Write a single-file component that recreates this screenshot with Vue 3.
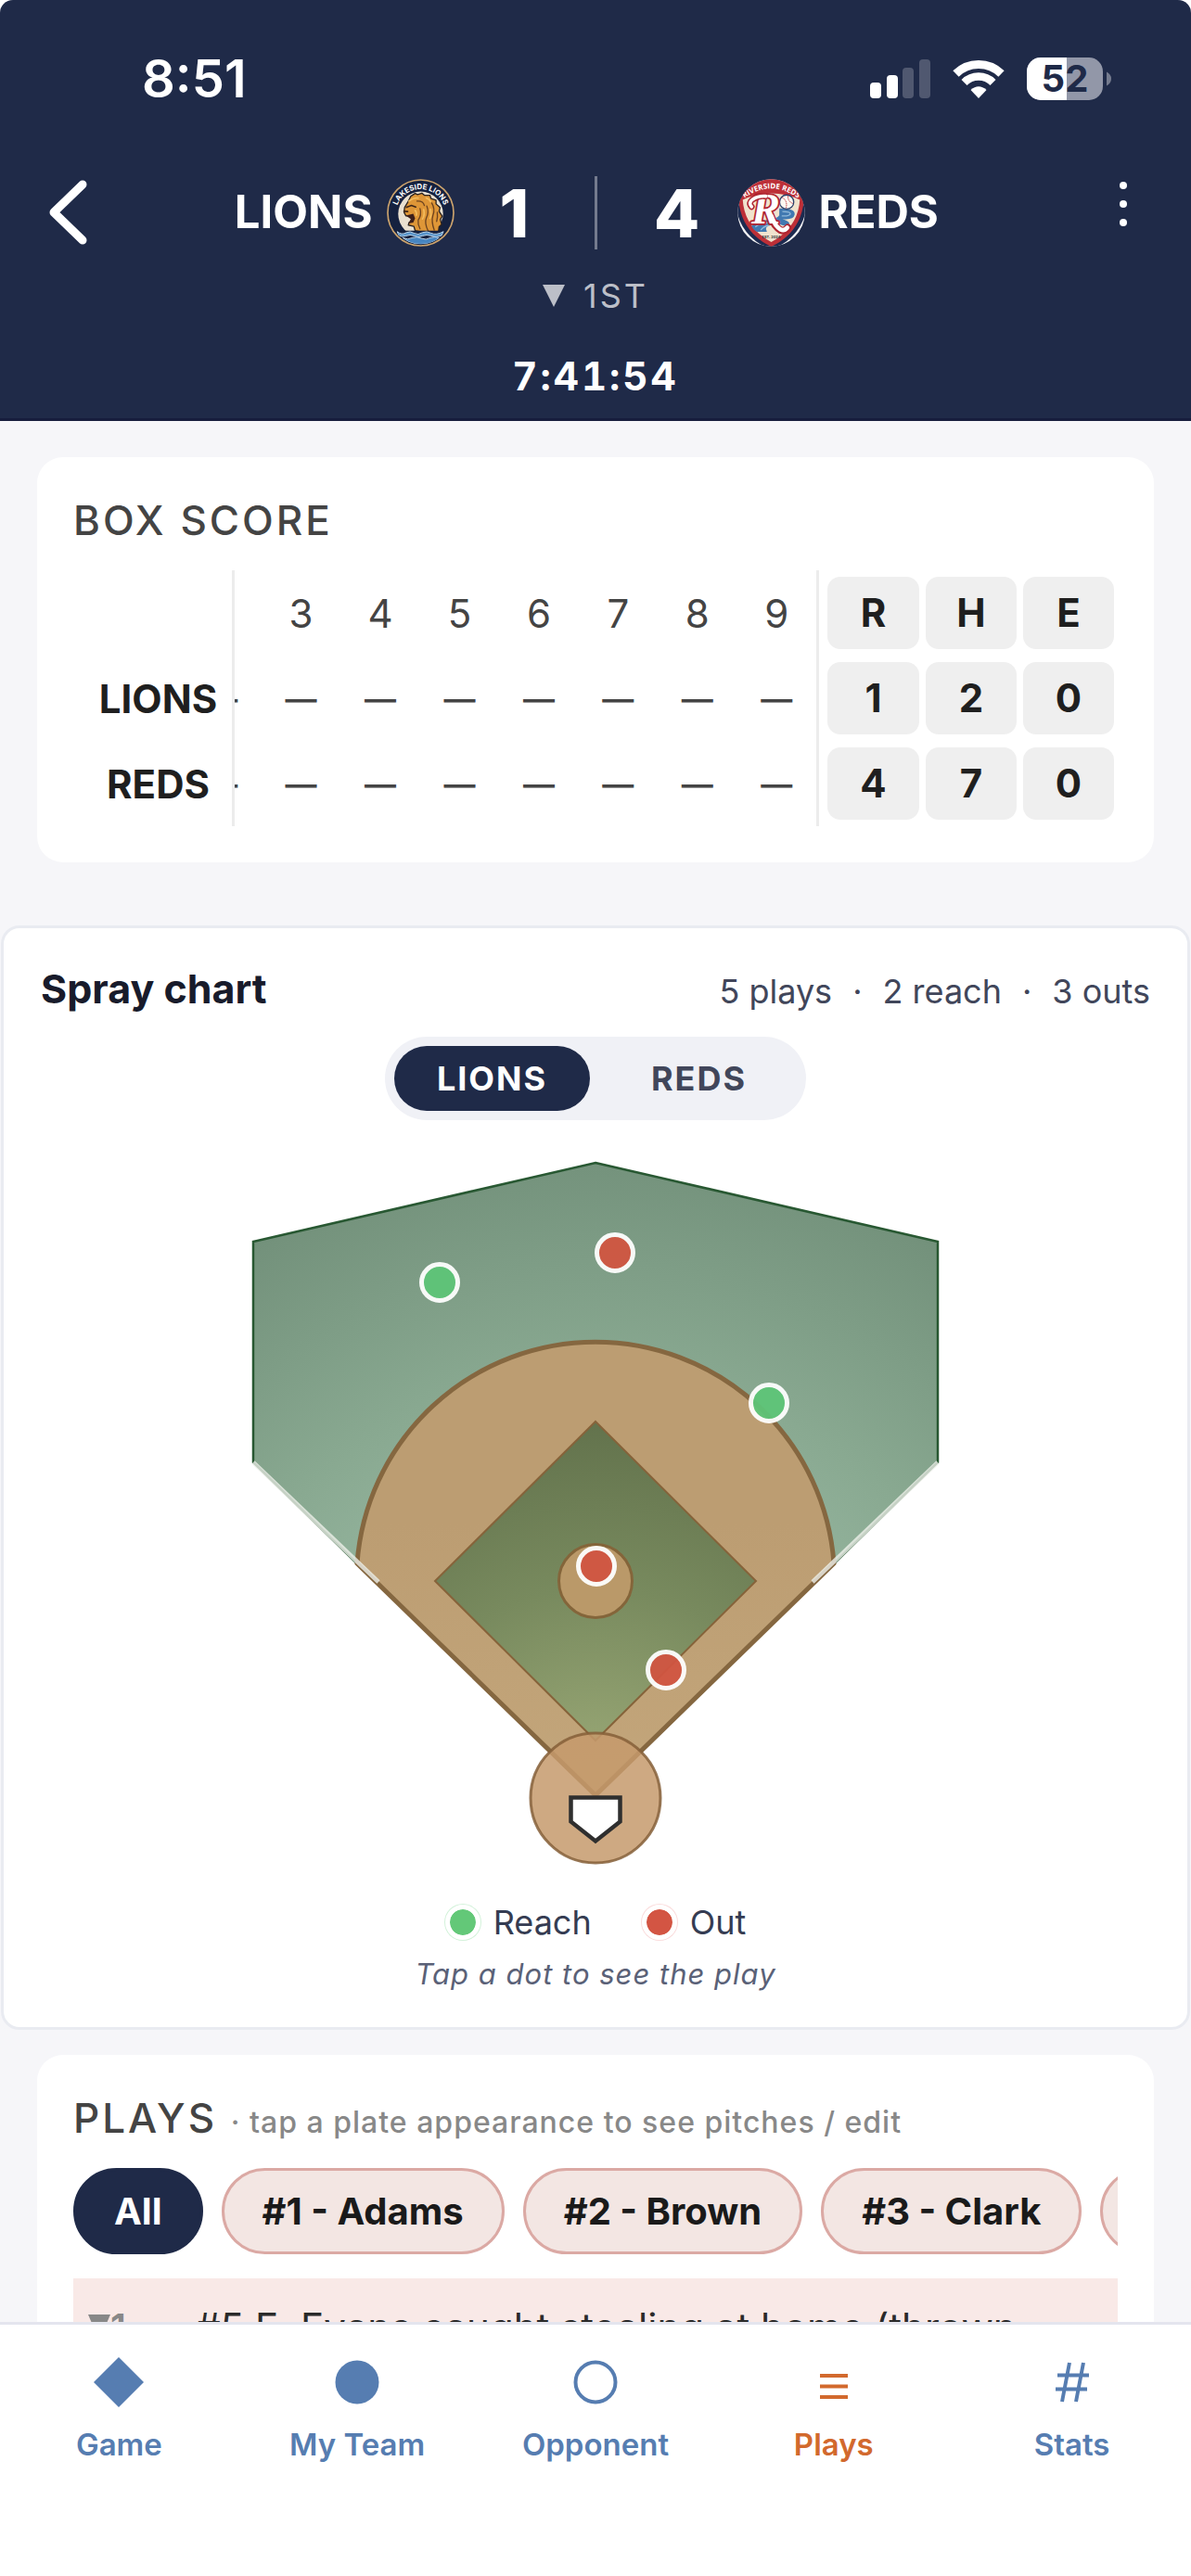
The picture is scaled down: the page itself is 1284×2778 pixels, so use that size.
<script setup>
import { onMounted, ref } from 'vue'

const innings = [1, 2, 3, 4, 5, 6, 7, 8, 9]

const teams = [
  { name: 'LIONS', runs: { 1: 1 }, totals: [1, 2, 0] },
  { name: 'REDS', runs: { 1: 4 }, totals: [4, 7, 0] }
]

const hits = [
  { id: 1, x: 204, y: 135, type: 'reach' },
  { id: 2, x: 393, y: 103, type: 'out' },
  { id: 3, x: 559, y: 265, type: 'reach' },
  { id: 4, x: 373, y: 441, type: 'out' },
  { id: 5, x: 448, y: 553, type: 'out' }
]

const batters = ['#1 - Adams', '#2 - Brown', '#3 - Clark', '#4 - Davis']

const tabs = [
  { id: 'game', label: 'Game' },
  { id: 'team', label: 'My Team' },
  { id: 'opponent', label: 'Opponent' },
  { id: 'plays', label: 'Plays' },
  { id: 'stats', label: 'Stats' }
]

const chartTeam = ref('LIONS')
const batter = ref('All')
const tab = ref('plays')
const scroller = ref(null)

onMounted(() => {
  scroller.value.scrollLeft = scroller.value.scrollWidth
})
</script>

<template>
  <div class="screen">
    <header class="top">
      <div class="status">
        <span class="clock">8:51</span>
        <div class="status-icons">
          <svg width="65" height="42" viewBox="0 0 65 42" fill="#fff">
            <rect x="0" y="25" width="12" height="17" rx="4" />
            <rect x="18" y="17" width="12" height="25" rx="4" />
            <rect x="35" y="9" width="12" height="33" rx="4" opacity="0.22" />
            <rect x="53" y="0" width="12" height="42" rx="4" opacity="0.22" />
          </svg>
          <svg width="56" height="42" viewBox="0 0 56 42" fill="none" stroke="#fff">
            <path d="M3.500 15.500 A35 35 0 0 1 52.500 15.500" stroke-width="9" />
            <path d="M12.500 25 A22 22 0 0 1 43.500 25" stroke-width="8.500" />
            <path d="M28 42 L19.500 33 Q28 25.500 36.500 33 Z" fill="#fff" stroke="none" />
          </svg>
          <svg width="91" height="46" viewBox="0 0 91 46">
            <clipPath id="level"><rect width="43" height="46" /></clipPath>
            <rect width="82" height="46" rx="15" fill="#9297a8" />
            <rect width="82" height="46" rx="15" fill="#fff" clip-path="url(#level)" />
            <path d="M86 15.500 Q91 18 91 23 Q91 28 86 30.500 Z" fill="#757b8e" />
            <text x="41" y="37" text-anchor="middle" class="battery">52</text>
          </svg>
        </div>
      </div>

      <div class="score-row">
        <button class="icon-btn" aria-label="Back">
          <svg width="42" height="70" viewBox="0 0 42 70" fill="none" stroke="#fff" stroke-width="9" stroke-linecap="round" stroke-linejoin="round">
            <path d="M37 5 L6 35 L37 65" />
          </svg>
        </button>

        <div class="scores">
          <div class="side away">
            <span class="team">LIONS</span>
            <svg class="logo" viewBox="20 22 220 220">
              <defs>
                <path id="lion-arc" d="M49 136 A81 81 0 0 1 211 136" />
                <clipPath id="lion-clip"><circle cx="130" cy="132" r="102" /></clipPath>
              </defs>
              <circle cx="130" cy="132" r="107" fill="#15213f" stroke="#cda46d" stroke-width="5" />
              <circle cx="130" cy="136" r="73" fill="#e9e0d0" />
              <path d="M128 190 Q198 206 203 134 Q204 170 180 200 L128 204 Z" fill="#15213f" />
              <path d="M98 78 L112 69 L120 73 L134 68 L142 75 L160 75 L164 86 L180 91 L180 103 L193 115 L190 127 L200 143 L194 154 L198 170 L190 177 L188 192 L150 198 L112 190 L108 176 L90 172 L92 164 L102 158 L98 142 L82 142 L76 130 L78 114 L88 98 Z" fill="#de9637" stroke="#2b2320" stroke-width="4" stroke-linejoin="round" />
              <path d="M82 141 L106 135 L112 150 L106 164 L90 167 L98 152 Z" fill="#3d1f1a" />
              <path d="M84 114 L100 108 L114 113 M76 127 L88 128" fill="none" stroke="#3d2518" stroke-width="5" stroke-linecap="round" />
              <path d="M118 94 Q138 92 142 108 M128 118 Q134 138 122 156 Q120 170 128 184 M150 110 Q158 130 148 150 Q142 166 154 190 M166 100 Q178 120 170 140 Q164 160 174 188 M184 130 Q186 148 182 160" fill="none" stroke="#6d431f" stroke-width="4" stroke-linecap="round" />
              <path d="M92 94 Q106 82 122 84 M112 124 Q118 130 116 140 M148 84 Q160 88 162 96 M140 122 Q144 140 136 152 M162 120 Q166 136 160 150" fill="none" stroke="#f3bd5e" stroke-width="5" stroke-linecap="round" />
              <g clip-path="url(#lion-clip)">
                <path d="M20 190 H240 V242 H20 Z" fill="#15213f" />
                <path d="M54 193 Q68 206 84 196 Q96 190 108 198 Q122 206 136 196 Q150 190 164 198 Q180 206 204 193 L198 206 Q180 214 164 207 Q150 201 136 207 Q122 214 108 207 Q96 201 82 207 Q68 212 58 205 Z" fill="#5794cb" stroke="#b7d2e8" stroke-width="3" />
                <path d="M72 213 Q88 222 104 213 Q118 208 132 215 Q148 222 162 213 Q176 208 190 213 Q168 234 130 234 Q96 234 72 213 Z" fill="#4785c0" stroke="#b7d2e8" stroke-width="3" />
              </g>
              <text class="logo-text lion-text"><textPath href="#lion-arc" startOffset="50%" text-anchor="middle">LAKESIDE LIONS</textPath></text>
            </svg>
          </div>
          <span class="points">1</span>
          <span class="divider"></span>
          <span class="points">4</span>
          <div class="side">
            <svg class="logo" viewBox="20 22 220 220">
              <defs>
                <path id="reds-arc" d="M38 88 Q130 18 222 88" />
                <clipPath id="reds-clip"><circle cx="130" cy="132" r="109" /></clipPath>
              </defs>
              <g clip-path="url(#reds-clip)">
                <rect x="20" y="22" width="220" height="220" fill="#f4f3f4" />
                <path d="M14 50 V100 Q22 206 130 254 Q238 206 246 100 V50 Z" fill="#1d2b50" />
                <path d="M24 18 V92 Q34 196 130 242 Q226 196 236 92 V18 Z" fill="#bd3038" />
                <path d="M34 88 Q130 44 226 88 Q220 184 130 230 Q40 184 34 88 Z" fill="#f0e3ce" stroke="#bd3038" stroke-width="6" />
                <path d="M156 118 Q208 116 206 138 Q202 156 166 152 Q204 164 178 176 Q150 164 132 170 Q104 178 116 194 L84 194 Q70 186 66 174 Q84 158 112 156 Q150 152 156 140 Z" fill="#4179b1" />
                <path d="M166 128 Q192 128 192 136 Q186 144 164 142 M78 178 Q94 164 122 164 M96 188 Q104 176 126 172" fill="none" stroke="#91bada" stroke-width="4" />
                <circle cx="180" cy="97" r="23" fill="#fbf8f2" stroke="#2c416b" stroke-width="4" />
                <path d="M165 82 Q184 92 178 117 M184 77 Q184 96 201 102" fill="none" stroke="#bd3038" stroke-width="3" stroke-dasharray="4 2" />
                <path d="M126 142 Q140 176 160 188 Q174 194 184 180" fill="none" stroke="#b02430" stroke-width="24" stroke-linecap="round" />
                <text x="112" y="168" text-anchor="middle" class="script-r">R</text>
                <path d="M66 112 Q54 100 70 88 Q88 76 108 78" fill="none" stroke="#b02430" stroke-width="20" stroke-linecap="round" />
                <path d="M66 112 Q54 100 70 88 Q88 76 112 78" fill="none" stroke="#fff" stroke-width="11" stroke-linecap="round" />
                <path d="M130 142 Q142 176 160 186 Q172 192 182 180" fill="none" stroke="#fff" stroke-width="14" stroke-linecap="round" />
                <text x="130" y="216" text-anchor="middle" class="logo-est">EST. 2024</text>
                <text class="logo-text reds-text"><textPath href="#reds-arc" startOffset="50%" text-anchor="middle">RIVERSIDE REDS</textPath></text>
              </g>
            </svg>
            <span class="team">REDS</span>
          </div>
        </div>

        <button class="icon-btn more" aria-label="More options">
          <svg width="10" height="50" viewBox="0 0 10 50" fill="#fff">
            <circle cx="5" cy="5" r="4" />
            <circle cx="5" cy="25" r="4" />
            <circle cx="5" cy="45" r="4" />
          </svg>
        </button>
      </div>

      <div class="inning">
        <svg width="24" height="24" viewBox="0 0 24 24"><path d="M0 0 H24 L12 24 Z" fill="currentColor" /></svg>
        <span>1ST</span>
      </div>
      <div class="timer">7:41:54</div>
    </header>

    <main class="content">
      <section class="card">
        <h2>BOX SCORE</h2>
        <div ref="scroller" class="box-scroll">
          <table class="box">
            <thead>
              <tr>
                <th class="name"></th>
                <th v-for="n in innings" :key="n" class="inn">{{ n }}</th>
                <th class="total r"><span>R</span></th>
                <th class="total h"><span>H</span></th>
                <th class="total e"><span>E</span></th>
              </tr>
            </thead>
            <tbody>
              <tr v-for="t in teams" :key="t.name">
                <th class="name">{{ t.name }}</th>
                <td v-for="n in innings" :key="n" class="inn" :class="{ dash: !t.runs[n] }">{{ t.runs[n] ?? '—' }}</td>
                <td class="total r"><span>{{ t.totals[0] }}</span></td>
                <td class="total h"><span>{{ t.totals[1] }}</span></td>
                <td class="total e"><span>{{ t.totals[2] }}</span></td>
              </tr>
            </tbody>
          </table>
        </div>
      </section>

      <section class="spray">
        <div class="spray-head">
          <h3>Spray chart</h3>
          <p><span>5 plays</span><span>·</span><span>2 reach</span><span>·</span><span>3 outs</span></p>
        </div>
        <div class="toggle">
          <button v-for="t in teams" :key="t.name" :class="{ active: chartTeam === t.name }" @click="chartTeam = t.name">{{ t.name }}</button>
        </div>

        <svg class="field" viewBox="0 0 744 766">
          <defs>
            <radialGradient id="grass" gradientUnits="userSpaceOnUse" cx="372" cy="690" r="700">
              <stop offset="0.35" stop-color="#9abaa4" />
              <stop offset="0.65" stop-color="#89a991" />
              <stop offset="1" stop-color="#73917b" />
            </radialGradient>
            <radialGradient id="infield" gradientUnits="userSpaceOnUse" cx="372" cy="690" r="410">
              <stop offset="0.15" stop-color="#94a372" />
              <stop offset="0.55" stop-color="#788a5e" />
              <stop offset="1" stop-color="#62724c" />
            </radialGradient>
            <linearGradient id="dirt" x1="0" y1="0" x2="0" y2="1">
              <stop offset="0.4" stop-color="#bc9d72" />
              <stop offset="1" stop-color="#c3a67b" />
            </linearGradient>
          </defs>
          <path d="M372 6 L741 91 V329 L372 689 L3 329 V91 Z" fill="url(#grass)" stroke="#285832" stroke-width="2.500" />
          <path d="M115 438 A257.700 257.700 0 0 1 629 438 L372 688 Z" fill="url(#dirt)" stroke="#856740" stroke-width="5" />
          <path d="M3 329 L138 458 M741 329 L606 458" stroke="#eef0ea" stroke-opacity="0.8" stroke-width="4.500" />
          <path d="M372 285 L545 457 L372 629 L199 457 Z" fill="url(#infield)" stroke="#86633a" stroke-width="2" />
          <circle cx="372" cy="457" r="39.500" fill="#ba9969" stroke="#84653a" stroke-width="3" />
          <circle cx="372" cy="691" r="70" fill="#c69a6c" fill-opacity="0.85" stroke="#855f38" stroke-opacity="0.85" stroke-width="3" />
          <path d="M345.500 690.500 H398.500 V716.500 L372 737.500 L345.500 716.500 Z" fill="#fff" stroke="#2f2f2f" stroke-width="4.500" />
          <circle v-for="h in hits" :key="h.id" class="hit" :class="h.type" :cx="h.x" :cy="h.y" r="19.500" />
        </svg>

        <div class="legend">
          <span class="key"><i class="dot reach"></i>Reach</span>
          <span class="key"><i class="dot out"></i>Out</span>
        </div>
        <p class="hint">Tap a dot to see the play</p>
      </section>

      <section class="card plays">
        <h2>PLAYS <small>· tap a plate appearance to see pitches / edit</small></h2>
        <div class="chips">
          <button class="chip" :class="{ active: batter === 'All' }" @click="batter = 'All'">All</button>
          <button v-for="b in batters" :key="b" class="chip" :class="{ active: batter === b }" @click="batter = b">{{ b }}</button>
        </div>
        <div class="play">
          <span class="half">
            <svg width="24" height="28" viewBox="0 0 24 28"><path d="M0 0 H24 L12 28 Z" fill="currentColor" /></svg>1
          </span>
          <span class="desc">#5 E. Evans caught stealing at home (thrown out)</span>
        </div>
      </section>
    </main>

    <nav class="tabs">
      <button v-for="t in tabs" :key="t.id" :class="{ active: tab === t.id }" @click="tab = t.id">
        <svg width="56" height="56" viewBox="0 0 56 56" fill="none" stroke="currentColor" stroke-width="4">
          <path v-if="t.id === 'game'" d="M28 1 L55 28 L28 55 L1 28 Z" fill="currentColor" stroke="none" />
          <circle v-else-if="t.id === 'team'" cx="28" cy="28" r="23.500" fill="currentColor" stroke="none" />
          <circle v-else-if="t.id === 'opponent'" cx="28" cy="28" r="21.500" />
          <path v-else-if="t.id === 'plays'" d="M13 21 H43 M13 32.500 H43 M13 44 H43" />
          <path v-else d="M25 7 L17 49 M40 7 L32 49 M12 20.500 H46 M10 35.500 H44" />
        </svg>
        <span>{{ t.label }}</span>
      </button>
    </nav>
  </div>
</template>

<style>
body {
  background: #fff;
}
</style>

<style scoped>
.screen {
  display: flex;
  flex-direction: column;
  height: 100vh;
  overflow: hidden;
  border-radius: 14px 14px 0 0;
  background: #f6f6f9;
  font-family: Inter, "Liberation Sans", sans-serif;
  color: #1f1f1f;
}

button {
  border: none;
  background: none;
  padding: 0;
  font-family: inherit;
  cursor: pointer;
}

h2, h3, p {
  margin: 0;
}

svg {
  display: block;
  flex-shrink: 0;
}

/* header */
.top {
  flex-shrink: 0;
  background: #1f2a48;
  border-bottom: 3px solid #171d3d;
  color: #fff;
  padding-bottom: 19px;
}

.status {
  display: flex;
  align-items: center;
  justify-content: space-between;
  height: 170px;
  padding: 0 86px 0 153px;
}

.clock {
  font-size: 56px;
  font-weight: 600;
}

.status-icons {
  display: flex;
  align-items: center;
  gap: 24px;
}

.battery {
  font-size: 40px;
  font-weight: 700;
  fill: #1f2a48;
}

.score-row {
  display: flex;
  align-items: center;
  height: 118px;
  padding: 0 52px;
}

.icon-btn {
  display: flex;
  width: 42px;
}

.more {
  justify-content: center;
  padding-bottom: 18px;
}

.scores {
  flex: 1;
  display: grid;
  grid-template-columns: 1fr 90px auto 90px 1fr;
  align-items: center;
  column-gap: 20px;
}

.side {
  display: flex;
  align-items: center;
  gap: 15px;
}

.away {
  justify-content: flex-end;
}

.team {
  font-size: 49px;
  line-height: 56px;
  font-weight: 700;
}

.logo {
  width: 73px;
  height: 73px;
}

.logo-text {
  fill: #fff;
  font-weight: 700;
}

.lion-text {
  font-size: 24px;
}

.reds-text {
  font-family: "Open Sans", sans-serif;
  font-size: 24px;
}

.logo-est {
  font-size: 12px;
  font-weight: 700;
  fill: #33343c;
}

.script-r {
  font-family: "Liberation Serif", serif;
  font-size: 140px;
  font-style: italic;
  font-weight: 700;
  fill: #fff;
  stroke: #b02430;
  stroke-width: 11px;
  stroke-linejoin: round;
  paint-order: stroke;
}

.points {
  font-size: 72px;
  font-weight: 800;
  text-align: center;
}

.divider {
  width: 3px;
  height: 79px;
  margin: 0 21px;
  background: #747b8e;
}

.inning {
  display: flex;
  align-items: center;
  justify-content: center;
  gap: 20px;
  height: 62px;
  font-size: 36px;
  letter-spacing: 3px;
  color: #bcbfc8;
}

.timer {
  margin-top: 30px;
  text-align: center;
  font-size: 42px;
  line-height: 52px;
  font-weight: 700;
  font-variant-numeric: tabular-nums;
  letter-spacing: 3px;
}

/* cards */
.content {
  flex: 1;
  min-height: 0;
  overflow: hidden;
  padding-top: 39px;
}

.card {
  margin: 0 40px;
  padding: 40px 39px 39px;
  border-radius: 28px;
  background: #fff;
}

h2 {
  font-size: 44px;
  line-height: 56px;
  font-weight: 500;
  letter-spacing: 3px;
  color: #444;
}

.box-scroll {
  margin: 26px 4px 0 0;
  overflow-x: auto;
  scrollbar-width: none;
}

.box {
  border-collapse: separate;
  border-spacing: 0;
  table-layout: fixed;
  width: 1264px;
  font-size: 42px;
}

.box th,
.box td {
  height: 92px;
  padding: 0;
  text-align: center;
}

.box .inn {
  font-weight: 400;
  color: #444;
}

.box .dash {
  font-size: 34px;
  font-weight: 600;
}

.box .name {
  position: sticky;
  left: 0;
  z-index: 1;
  width: 159px;
  padding-left: 12px;
  border-right: 3px solid #ececec;
  background: #fff;
  font-weight: 700;
}

.box .total {
  position: sticky;
  z-index: 1;
  width: 105px;
  background: #fff;
  font-weight: 700;
}

.box .r {
  right: 210px;
  width: 108px;
  border-left: 3px solid #ececec;
}

.box .h {
  right: 105px;
}

.box .e {
  right: 0;
}

.total span {
  display: block;
  margin-left: 7px;
  border-radius: 14px;
  background: #efefef;
  line-height: 78px;
}

.r span {
  margin-left: 9px;
}

/* spray chart */
.spray {
  margin: 68px 1px 27px;
  padding: 39px 40px 35px;
  border: 3px solid #e9ebf1;
  border-radius: 20px;
  background: #fff;
}

.spray-head {
  display: flex;
  align-items: baseline;
  justify-content: space-between;
}

h3 {
  font-size: 43px;
  line-height: 52px;
  font-weight: 700;
  color: #181b2b;
}

.spray-head p {
  display: flex;
  gap: 22px;
  font-size: 36px;
  color: #41465a;
}

.toggle {
  display: flex;
  gap: 12px;
  width: fit-content;
  margin: 26px auto 40px;
  padding: 10px;
  border-radius: 45px;
  background: #f0f1f6;
}

.toggle button {
  min-width: 211px;
  height: 70px;
  border-radius: 35px;
  font-size: 36px;
  font-weight: 700;
  letter-spacing: 2px;
  color: #41465a;
}

.toggle .active {
  background: #1f2a48;
  color: #fff;
}

.field {
  width: 100%;
  max-width: 744px;
  margin: 0 auto;
}

.hit {
  stroke: #fff;
  stroke-width: 5px;
  opacity: 0.94;
  cursor: pointer;
}

.hit.reach {
  fill: #5ec578;
}

.hit.out {
  fill: #d15541;
}

.legend {
  display: flex;
  justify-content: center;
  gap: 54px;
  margin-top: 35px;
}

.key {
  display: flex;
  align-items: center;
  gap: 14px;
  font-size: 36px;
  line-height: 48px;
  color: #353c52;
}

.dot {
  width: 28px;
  height: 28px;
  border: 5px solid #fff;
  border-radius: 50%;
}

.dot.reach {
  background: #63c878 padding-box;
  box-shadow: 0 0 0 1px #d3f2da;
}

.dot.out {
  background: #d35543 padding-box;
  box-shadow: 0 0 0 1px #fadcdc;
}

.hint {
  margin-top: 9px;
  text-align: center;
  font-size: 31px;
  line-height: 45px;
  font-style: italic;
  letter-spacing: 1px;
  color: #5a6177;
}

/* plays */
h2 small {
  font-size: 32px;
  line-height: 1;
  letter-spacing: 1px;
  color: #888;
}

.chips {
  display: flex;
  gap: 20px;
  margin: 26px 0;
  overflow: hidden;
}

.chip {
  flex-shrink: 0;
  height: 93px;
  padding: 0 41px;
  border: 3px solid #dba9a4;
  border-radius: 47px;
  background: #f3e6e3;
  font-size: 40px;
  font-weight: 700;
  color: #1a1a1a;
}

.chip.active {
  border-color: #1f2a48;
  background: #1f2a48;
  color: #fff;
}

.play {
  display: flex;
  padding: 26px 60px 26px 16px;
  background: #f9e9e7;
  font-size: 42px;
  line-height: 54px;
}

.half {
  display: flex;
  align-items: center;
  align-self: flex-start;
  width: 116px;
  font-size: 40px;
  font-weight: 600;
  color: #888;
}

.desc {
  flex: 1;
  color: #2a2a2a;
}

/* bottom bar */
.tabs {
  flex-shrink: 0;
  display: flex;
  align-items: flex-start;
  height: 237px;
  padding-top: 34px;
  border-top: 3px solid #e4e5ee;
  background: #fff;
}

.tabs button {
  flex: 1;
  display: flex;
  flex-direction: column;
  align-items: center;
  gap: 15px;
  font-size: 33px;
  line-height: 48px;
  font-weight: 600;
  color: #567db1;
}

.tabs .active {
  color: #d2692d;
}
</style>
